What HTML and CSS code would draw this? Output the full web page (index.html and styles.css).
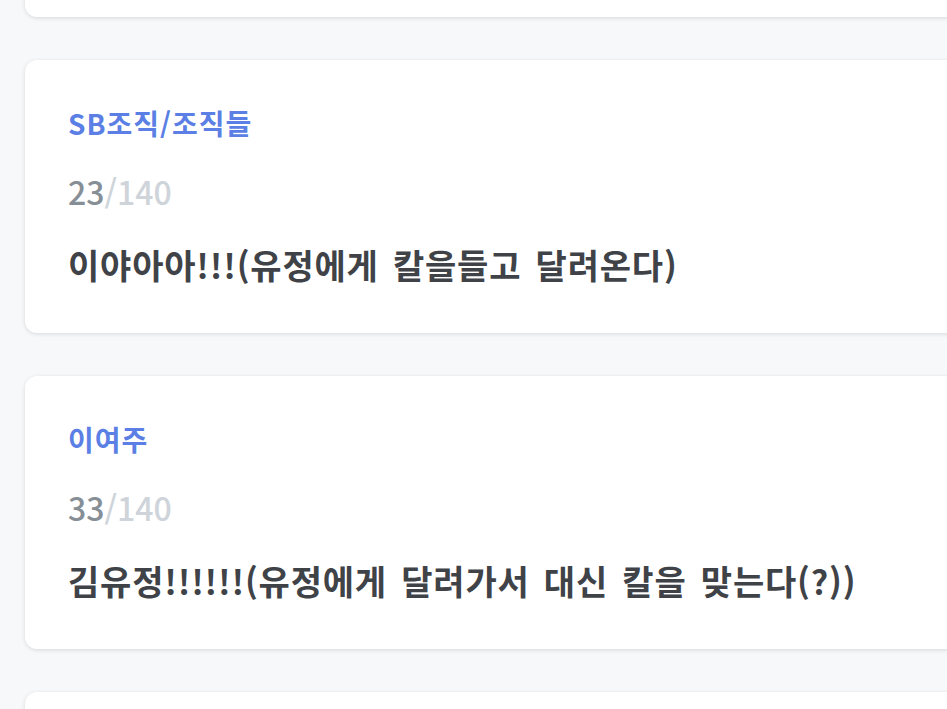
FILE: index.html
```html
<!DOCTYPE html>
<html lang="ko">
<head>
<meta charset="utf-8">
<title>대사</title>
<link rel="stylesheet" href="styles.css">
</head>
<body>
<main class="feed">
  <article class="card">
    <div class="name">김유정</div>
    <div class="count"><span class="cur">12</span><span class="max">/140</span></div>
    <p class="msg">오빠 조심해!!!</p>
  </article>
  <article class="card">
    <div class="name">SB조직/조직들</div>
    <div class="count"><span class="cur">23</span><span class="max">/140</span></div>
    <p class="msg">이야아아!!!(유정에게 칼을들고 달려온다)</p>
  </article>
  <article class="card">
    <div class="name">이여주</div>
    <div class="count"><span class="cur">33</span><span class="max">/140</span></div>
    <p class="msg">김유정!!!!!!(유정에게 달려가서 대신 칼을 맞는다(?))</p>
  </article>
  <article class="card">
    <div class="name">김유정</div>
    <div class="count"><span class="cur">8</span><span class="max">/140</span></div>
    <p class="msg">언니!!!</p>
  </article>
</main>
</body>
</html>
```
FILE: styles.css
```css
html, body {
  margin: 0;
  padding: 0;
  background: #f7f8fa;
  overflow: hidden;
  height: 100%;
}
body {
  font-family: "Noto Sans CJK KR", "Noto Sans", sans-serif;
}
.feed {
  display: flex;
  flex-direction: column;
  gap: 43px;
  padding-left: 25px;
  margin-top: -256px;
}
.card {
  width: 1000px;
  box-sizing: border-box;
  background: #ffffff;
  border-radius: 12px;
  box-shadow: 0 1px 4px rgba(0, 0, 0, 0.13);
  padding: 43px 43px 46px;
  display: flex;
  flex-direction: column;
}
.name {
  font-size: 28px;
  line-height: 40px;
  font-weight: 700;
  letter-spacing: 1px;
  color: #5b7fe4;
}
.count {
  margin-top: 28px;
  font-size: 32px;
  line-height: 40px;
  font-weight: 500;
}
.cur { color: #868e96; }
.max { color: #ced4da; }
.msg {
  margin: 32px 0 0;
  font-size: 34px;
  line-height: 44px;
  font-weight: 700;
  letter-spacing: 0.8px;
  word-spacing: 4px;
  color: #3f4348;
  white-space: nowrap;
}
```
